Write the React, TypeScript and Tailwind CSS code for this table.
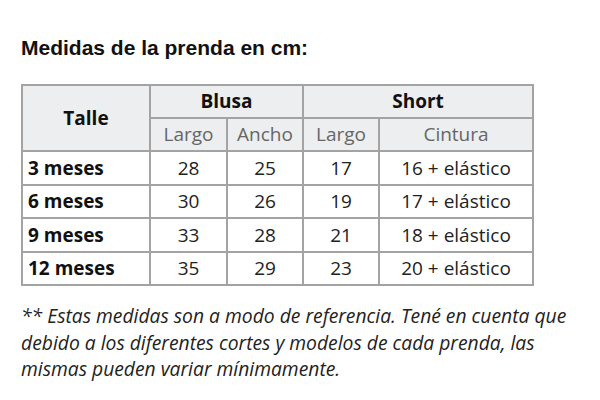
const rows = [
  ["3 meses", "28", "25", "17", "16 + elástico"],
  ["6 meses", "30", "26", "19", "17 + elástico"],
  ["9 meses", "33", "28", "21", "18 + elástico"],
  ["12 meses", "35", "29", "23", "20 + elástico"],
];

export default function App() {
  return (
    <div className="w-[600px] h-[400px] bg-white pt-[36px] pl-[21px]">
      <h2 className="font-['Liberation_Sans',Arial,sans-serif] font-bold text-[21px] leading-[24px] text-[#111]">
        Medidas de la prenda en cm:
      </h2>

      <table className="mt-[24px] border-collapse font-['Open_Sans',sans-serif] text-[19px] text-[#222] w-[511px] table-fixed">
        <colgroup>
          <col className="w-[128px]" />
          <col className="w-[77px]" />
          <col className="w-[76px]" />
          <col className="w-[76px]" />
          <col className="w-[154px]" />
        </colgroup>
        <thead className="bg-[#eceeef]">
          <tr className="h-[33px]">
            <th rowSpan={2} className="border-2 border-[#a3a3a3] font-bold text-[#111]">
              Talle
            </th>
            <th colSpan={2} className="border-2 border-[#a3a3a3] font-bold text-[#111]">
              Blusa
            </th>
            <th colSpan={2} className="border-2 border-[#a3a3a3] font-bold text-[#111]">
              Short
            </th>
          </tr>
          <tr className="h-[33px]">
            <th className="border-2 border-[#a3a3a3] font-normal text-[#666]">Largo</th>
            <th className="border-2 border-[#a3a3a3] font-normal text-[#666]">Ancho</th>
            <th className="border-2 border-[#a3a3a3] font-normal text-[#666]">Largo</th>
            <th className="border-2 border-[#a3a3a3] font-normal text-[#666]">Cintura</th>
          </tr>
        </thead>
        <tbody>
          {rows.map((r) => (
            <tr key={r[0]} className="h-[33.5px]">
              <td className="border-2 border-[#a3a3a3] px-[5px] font-bold text-[#111]">{r[0]}</td>
              {r.slice(1).map((v, i) => (
                <td key={i} className="border-2 border-[#a3a3a3] text-center">
                  {v}
                </td>
              ))}
            </tr>
          ))}
        </tbody>
      </table>

      <p className="mt-[17px] w-[560px] font-['Open_Sans',sans-serif] italic text-[19.3px] leading-[26.5px] text-[#222]">
        ** Estas medidas son a modo de referencia. Tené en cuenta que debido a los diferentes cortes y
        modelos de cada prenda, las mismas pueden variar mínimamente.
      </p>
    </div>
  );
}
